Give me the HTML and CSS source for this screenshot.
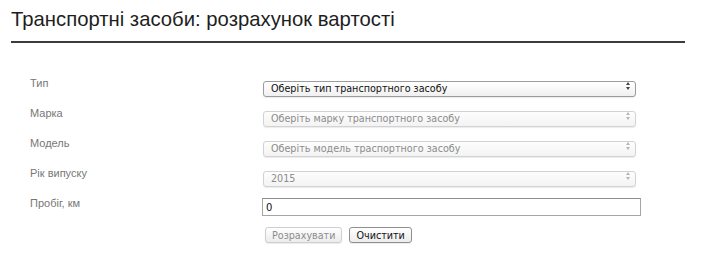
FILE: index.html
```html
<!DOCTYPE html>
<html lang="uk">
<head>
    <meta charset="UTF-8">
    <meta name="viewport" content="width=device-width, initial-scale=1.0">
    <title>Транспортні засоби: розрахунок вартості</title>
    <link rel="stylesheet" href="styles.css">
</head>
<body>
    <div class="page">
        <h1 class="title">Транспортні засоби: розрахунок вартості</h1>

        <form class="calc-form">
            <div class="row">
                <label class="label" for="type">Тип</label>
                <div class="select-wrap">
                    <select id="type" class="select">
                        <option>Оберіть тип транспортного засобу</option>
                    </select>
                </div>
            </div>

            <div class="row">
                <label class="label" for="brand">Марка</label>
                <div class="select-wrap disabled">
                    <select id="brand" class="select" disabled>
                        <option>Оберіть марку транспортного засобу</option>
                    </select>
                </div>
            </div>

            <div class="row">
                <label class="label" for="model">Модель</label>
                <div class="select-wrap disabled">
                    <select id="model" class="select" disabled>
                        <option>Оберіть модель траспортного засобу</option>
                    </select>
                </div>
            </div>

            <div class="row">
                <label class="label" for="year">Рік випуску</label>
                <div class="select-wrap disabled">
                    <select id="year" class="select" disabled>
                        <option>2015</option>
                    </select>
                </div>
            </div>

            <div class="row">
                <label class="label" for="mileage">Пробіг, км</label>
                <input type="text" id="mileage" class="text-input" value="0">
            </div>

            <div class="row actions">
                <button type="button" class="btn" disabled>Розрахувати</button>
                <button type="reset" class="btn">Очистити</button>
            </div>
        </form>
    </div>
</body>
</html>
```

FILE: styles.css
```css
* {
    margin: 0;
    padding: 0;
    box-sizing: border-box;
}

body {
    background: #fff;
    font-family: "Liberation Sans", Arial, sans-serif;
    color: #222;
}

.page {
    width: 685px;
    padding-left: 11px;
}

.title {
    font-size: 20.3px;
    font-weight: normal;
    line-height: 25px;
    color: #1e1e1e;
    padding-top: 7px;
    padding-bottom: 9px;
    border-bottom: 2px solid #3c3c3c;
}

.calc-form {
    padding-top: 35px;
    padding-left: 19px;
}

.row {
    display: flex;
    align-items: flex-start;
    height: 30px;
}

.label {
    width: 233px;
    flex-shrink: 0;
    font-size: 11px;
    line-height: 12px;
    margin-top: -1px;
    color: #777;
}

.select-wrap {
    position: relative;
    width: 373px;
    height: 16px;
}

.select {
    appearance: none;
    -webkit-appearance: none;
    width: 100%;
    height: 16px;
    padding: 0 20px 0 7px;
    font-family: "DejaVu Sans", "Lucida Grande", sans-serif;
    font-size: 9.6px;
    color: #111;
    background: linear-gradient(#ffffff, #f0f0f0);
    border: 1px solid #9c9c9c;
    border-radius: 3px;
    box-shadow: 0 1px 1px rgba(0, 0, 0, 0.08);
    outline: none;
}

.select:disabled {
    color: #8c8c8c;
    opacity: 1;
    border-color: #d2d2d2;
    background: linear-gradient(#fdfdfd, #f3f3f3);
}

/* стрілки вгору/вниз */
.select-wrap::before,
.select-wrap::after {
    content: "";
    position: absolute;
    right: 6px;
    width: 0;
    height: 0;
    border-left: 2px solid transparent;
    border-right: 2px solid transparent;
    pointer-events: none;
}

.select-wrap::before {
    top: 4px;
    border-bottom: 3px solid #444;
}

.select-wrap::after {
    top: 9px;
    border-top: 3px solid #444;
}

.select-wrap.disabled::before {
    border-bottom-color: #b5b5b5;
}

.select-wrap.disabled::after {
    border-top-color: #b5b5b5;
}

.text-input {
    width: 379px;
    height: 18px;
    margin-left: -1px;
    padding: 0 3px;
    font-family: "DejaVu Sans", "Lucida Grande", sans-serif;
    font-size: 10px;
    color: #111;
    border: 1px solid #a5a5a5;
    border-top-color: #8e8e8e;
    background: #fff;
    outline: none;
}

.actions {
    padding-left: 235px;
    gap: 7px;
    margin-top: -1px;
}

.btn {
    height: 16px;
    padding: 0 6px;
    font-family: "DejaVu Sans", "Lucida Grande", sans-serif;
    font-size: 9.6px;
    color: #111;
    background: linear-gradient(#ffffff, #ececec);
    border: 1px solid #8f8f8f;
    border-radius: 3px;
    box-shadow: 0 1px 1px rgba(0, 0, 0, 0.08);
    cursor: pointer;
}

.btn:disabled {
    color: #8c8c8c;
    border-color: #cfcfcf;
    cursor: default;
}
```
